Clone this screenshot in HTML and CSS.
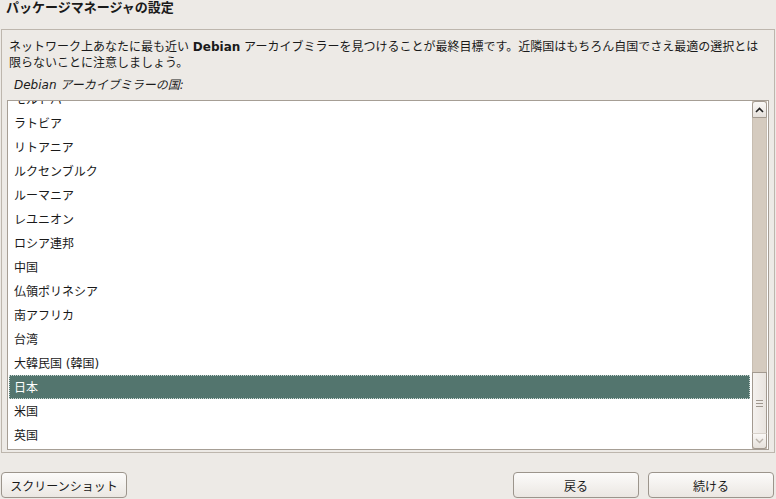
FILE: index.html
```html
<!DOCTYPE html>
<html lang="ja">
<head>
    <meta charset="UTF-8">
    <title>パッケージマネージャの設定</title>
    <link rel="stylesheet" href="styles.css">
</head>
<body>
<div class="title">パッケージマネージャの設定</div>

<div class="panel">
    <p class="desc">ネットワーク上あなたに最も近い <b>Debian</b> アーカイブミラーを見つけることが最終目標です。近隣国はもちろん自国でさえ最適の選択とは限らないことに注意しましょう。</p>
    <p class="label">Debian アーカイブミラーの国:</p>

    <div class="listbox">
        <div class="list-view">
            <ul class="rows">
                <li>モルドバ</li>
                <li>ラトビア</li>
                <li>リトアニア</li>
                <li>ルクセンブルク</li>
                <li>ルーマニア</li>
                <li>レユニオン</li>
                <li>ロシア連邦</li>
                <li>中国</li>
                <li>仏領ポリネシア</li>
                <li>南アフリカ</li>
                <li>台湾</li>
                <li>大韓民国 (韓国)</li>
                <li class="selected">日本</li>
                <li>米国</li>
                <li>英国</li>
            </ul>
        </div>
        <div class="scrollbar">
            <div class="sb-btn sb-up">
                <svg width="9" height="6" viewBox="0 0 9 6"><path d="M1 5 L4.5 1.5 L8 5" fill="none" stroke="#222" stroke-width="1.6"/></svg>
            </div>
            <div class="sb-trough"></div>
            <div class="sb-thumb">
                <span></span><span></span><span></span>
            </div>
            <div class="sb-btn sb-down">
                <svg width="9" height="6" viewBox="0 0 9 6"><path d="M1 1 L4.5 4.5 L8 1" fill="none" stroke="#b9b2aa" stroke-width="1.4"/></svg>
            </div>
        </div>
    </div>
</div>

<div class="actions">
    <button class="btn">スクリーンショット</button>
    <div class="nav">
        <button class="btn">戻る</button>
        <button class="btn">続ける</button>
    </div>
</div>
</body>
</html>
```

FILE: styles.css
```css
/* ページ全体 */
body {
    margin: 0;
    background: #edeae6;
    color: #1a1a1a;
    font-family: "DejaVu Sans", "Noto Sans CJK JP", sans-serif;
    font-size: 12px;
}

.title {
    height: 29px;
    padding-left: 6px;
    font-size: 13px;
    font-weight: bold;
    line-height: 16px;
}

/* 外枠 */
.panel {
    height: 422px;
    margin: 0 1px;
    border: 1px solid #bdb6ad;
}

.desc {
    margin: 0;
    padding: 9px 6px 0 7px;
    line-height: 16px;
}

.label {
    margin: 6px 0 0 12px;
    font-style: italic;
    line-height: 16px;
}

/* リスト */
.listbox {
    display: flex;
    height: 348px;
    margin: 7px 5px 0 5px;
    border: 1px solid #a69e95;
    background: #fff;
}

.list-view {
    flex: 1;
    overflow: hidden;
}

.rows {
    list-style: none;
    margin: -14px 0 0 0;
    padding: 0;
}

.rows li {
    height: 24px;
    line-height: 27px;
    padding-left: 6px;
    overflow: hidden;
}

.rows li.selected {
    margin: 0 2px 0 1px;
    padding-left: 5px;
    background: #53756e;
    color: #fff;
    outline: 1px dotted #c9d6d2;
    outline-offset: -1px;
}

/* スクロールバー */
.scrollbar {
    display: flex;
    flex-direction: column;
    width: 15px;
    margin-right: 1px;
    background: #d5cbbf;
}

.sb-btn {
    display: flex;
    justify-content: center;
    align-items: center;
    box-sizing: border-box;
    border: 1px solid #a39a90;
    background: linear-gradient(#faf8f6, #e6e1db);
}

.sb-up {
    height: 17px;
    border-radius: 3px 3px 0 0;
}

.sb-down {
    height: 15px;
    border-radius: 0 0 3px 3px;
    border-top: none;
}

.sb-trough {
    flex: 1;
    border-left: 1px solid #c7bdb1;
    border-right: 1px solid #c7bdb1;
}

.sb-thumb {
    display: flex;
    flex-direction: column;
    justify-content: center;
    align-items: center;
    gap: 2px;
    box-sizing: border-box;
    height: 62px;
    border: 1px solid #a39a90;
    border-bottom: 1px solid #d8d2cb;
    background: linear-gradient(90deg, #f4f1ee, #e9e4df);
}

.sb-thumb span {
    display: block;
    width: 7px;
    height: 1px;
    background: #9f978e;
}

/* ボタン */
.actions {
    display: flex;
    justify-content: space-between;
    margin-top: 19px;
    padding: 0 2px 0 1px;
}

.nav {
    display: flex;
    gap: 9px;
}

.btn {
    width: 126px;
    height: 26px;
    padding: 0;
    border: 1px solid #9c958c;
    border-radius: 4px;
    background: linear-gradient(#fcfbfa, #ebe7e2);
    color: #1a1a1a;
    font-family: "DejaVu Sans", "Noto Sans CJK JP", sans-serif;
    font-size: 12px;
}
```
